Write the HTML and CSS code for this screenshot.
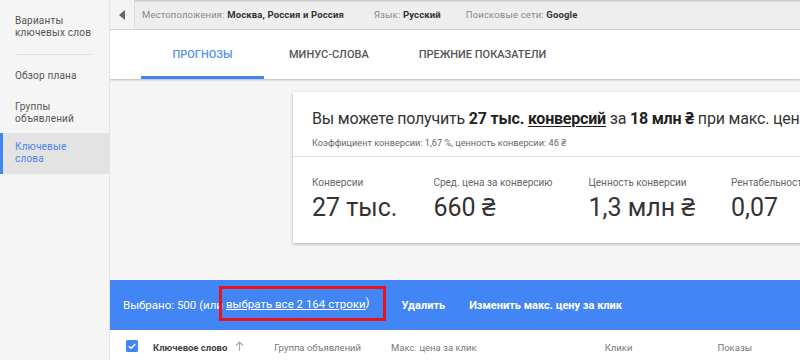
FILE: index.html
```html
<!DOCTYPE html>
<html lang="ru">
<head>
<meta charset="utf-8">
<link rel="stylesheet" href="styles.css">
</head>
<body>
<div class="app">
  <aside class="sidebar">
    <div class="nav-item first">Варианты<br>ключевых слов</div>
    <div class="nav-sep"></div>
    <div class="nav-item plan">Обзор плана</div>
    <div class="nav-item groups">Группы<br>объявлений</div>
    <div class="nav-item active">Ключевые<br>слова</div>
  </aside>
  <main class="main">
    <div class="topbar">
      <div class="back"><svg width="7" height="10" viewBox="0 0 7 10"><path d="M6 0 L0 5 L6 10 Z" fill="#666"/></svg></div>
      <div class="filter"><span class="fl">Местоположения:</span> <b>Москва, Россия и Россия</b></div>
      <div class="filter lang"><span class="fl">Язык:</span> <b>Русский</b></div>
      <div class="filter"><span class="fl">Поисковые сети:</span> <b>Google</b></div>
    </div>
    <nav class="tabs">
      <div class="tab active">ПРОГНОЗЫ</div>
      <div class="tab">МИНУС-СЛОВА</div>
      <div class="tab">ПРЕЖНИЕ ПОКАЗАТЕЛИ</div>
    </nav>
    <section class="content">
      <div class="card">
        <div class="card-head">
          <div class="headline">Вы можете получить <b>27 тыс.</b> <b class="u">конверсий</b> за <b>18 млн ₴</b> при макс. цене за клик</div>
          <div class="subline">Коэффициент конверсии: 1,67 %, ценность конверсии: 46 ₴</div>
        </div>
        <div class="metrics">
          <div class="metric"><div class="ml">Конверсии</div><div class="mv">27 тыс.</div></div>
          <div class="metric"><div class="ml">Сред. цена за конверсию</div><div class="mv">660 ₴</div></div>
          <div class="metric"><div class="ml">Ценность конверсии</div><div class="mv">1,3 млн ₴</div></div>
          <div class="metric"><div class="ml">Рентабельность</div><div class="mv">0,07</div></div>
        </div>
      </div>
    </section>
    <div class="selbar">
      <span class="seltext">Выбрано: 500 (или</span>
      <span class="hl"><a class="sellink">выбрать все 2 164 строки</a>)</span>
      <span class="act">Удалить</span>
      <span class="act">Изменить макс. цену за клик</span>
    </div>
    <div class="thead">
      <span class="cb"><svg width="12" height="12" viewBox="0 0 12 12"><rect width="12" height="12" rx="1.5" fill="#4285f4"/><path d="M2.8 6.2 L5 8.3 L9.3 3.9" stroke="#fff" stroke-width="1.4" fill="none"/></svg></span>
      <span class="th kw">Ключевое слово</span>
      <span class="arrow"><svg width="9" height="10" viewBox="0 0 9 10"><path d="M4.5 10 V1 M1 4.5 L4.5 1 L8 4.5" stroke="#aaa" stroke-width="1.2" fill="none"/></svg></span>
      <span class="th c-group">Группа объявлений</span>
      <span class="th c-bid">Макс. цена за клик</span>
      <span class="th c-clicks">Клики</span>
      <span class="th c-impr">Показы</span>
    </div>
  </main>
</div>
</body>
</html>
```
FILE: styles.css
```css
* { box-sizing: border-box; }
html, body { margin: 0; padding: 0; }
body {
  width: 800px; height: 360px; overflow: hidden;
  font-family: Roboto, "Noto Sans", Arial, sans-serif;
  background: #f5f5f5; color: #333;
}
.app { display: flex; width: 800px; height: 360px; }
.sidebar {
  width: 110px; flex: none; background: #f5f5f5;
  border-right: 1px solid #e3e3e3;
  padding-top: 15px;
  font-size: 10px; line-height: 12px; color: #555; letter-spacing: 0.2px;
}
.nav-item { padding: 0 15px; }
.nav-sep { height: 1px; background: #dedede; margin: 15px 18px 0 17px; }
.nav-item.plan { margin-top: 15px; }
.nav-item.groups { margin-top: 19px; }
.nav-item.active {
  background: #e3e3e3; color: #4a86e8;
  border-left: 3px solid #4285f4; padding: 8px 12px 9px;
  margin-top: 8px;
}
.main { flex: 1; min-width: 0; display: flex; flex-direction: column; overflow: hidden; background: #f5f5f5; }
.topbar {
  height: 30px; flex: none; display: flex; align-items: center;
  background: #eeeeee; border-bottom: 1px solid #d6d6d6;
  box-shadow: inset 0 2px 2px -1px #bbb;
  font-size: 9.5px; color: #888; white-space: nowrap;
}
.back {
  width: 25px; height: 29px; display: flex; align-items: center; justify-content: center;
  background: #f3f3f3; border-right: 1px solid #dcdcdc; margin-right: 7px;
}
.filter { margin-right: 30px; letter-spacing: 0.15px; }
.filter.lang { margin-right: 25px; }
.filter b { color: #333; font-weight: 700; }
.tabs {
  height: 49px; flex: none; background: #fff; display: flex; padding-left: 31px;
  box-shadow: 0 1px 2px rgba(0,0,0,0.25); position: relative; z-index: 1;
}
.tab {
  min-width: 123px; padding: 0 25px; display: flex; align-items: center; justify-content: center;
  font-size: 11px; font-weight: 500; color: #555; border-bottom: 3px solid transparent; padding-top: 3px;
}
.tab.active { color: #5a8ff0; border-bottom-color: #4285f4; }
.content { flex: none; height: 201px; padding: 13px 0 0 183px; }
.card {
  width: 620px; background: #fff; white-space: nowrap;
  box-shadow: 0 1px 3px rgba(0,0,0,0.3);
}
.card-head { padding: 17px 19px 8px; border-bottom: 1px solid #e2e2e2; }
.headline { font-size: 16px; line-height: 20px; color: #333; letter-spacing: -0.2px; }
.headline b { font-weight: 700; color: #222; }
.headline .u { text-decoration: underline; text-underline-offset: 2px; }
.subline { margin-top: 8px; font-size: 9.2px; line-height: 11px; color: #666; }
.metrics { display: flex; gap: 36px; padding: 20px 19px 20px; }
.ml { font-size: 10px; line-height: 12px; color: #666; }
.mv { margin-top: 4px; font-size: 25px; line-height: 30px; color: #333; }
.selbar {
  height: 50px; flex: none; background: #4285f4; color: #fff;
  display: flex; align-items: center; padding-left: 13px; white-space: nowrap;
  font-size: 11.5px;
}
.seltext { margin-right: -5px; }
.hl {
  display: inline-flex; align-items: center; height: 35px; line-height: 1;
  border: 3px solid #e8121b; padding: 0 13px 0 4px; margin-left: 1px; margin-top: -4px;
}
.sellink { text-decoration: underline; text-underline-offset: 1px; margin-top: 4px; }
.act { font-weight: 700; font-size: 11px; margin-left: 16px; }
.act + .act { margin-left: 24px; }
.thead {
  flex: 1; background: #fff; display: flex; align-items: flex-start; padding-top: 10px;
  font-size: 9.5px; color: #777; white-space: nowrap;
}
.cb { margin-left: 16px; width: 12px; height: 12px; display: flex; }
.th { margin-top: 2px; }
.th.kw { margin-left: 15px; font-weight: 700; color: #444; }
.arrow { margin-left: 8px; margin-top: 1px; }
.c-group { margin-left: 30px; }
.c-bid { margin-left: 30px; }
.c-clicks { margin-left: 128px; }
.c-impr { margin-left: 85px; }
```
